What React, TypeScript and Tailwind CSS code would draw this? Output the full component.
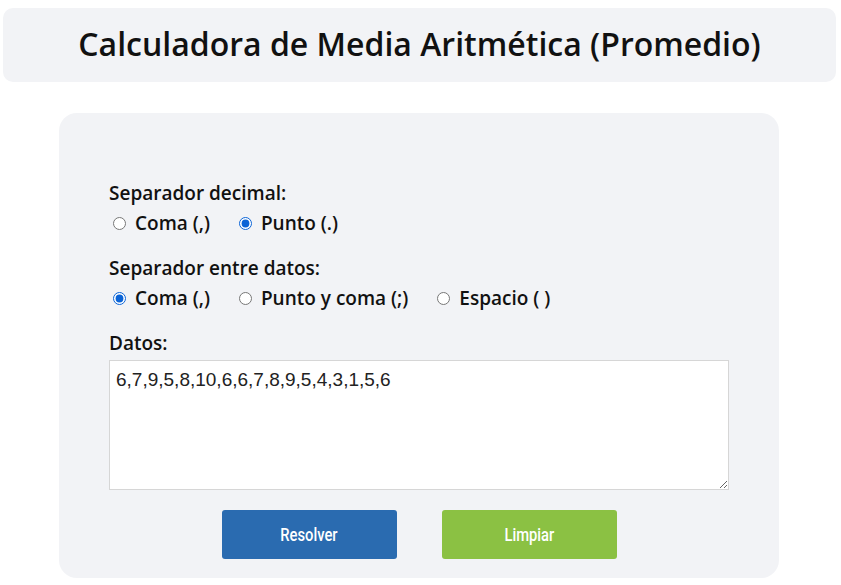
import React from "react";

function Opt({ label, checked, name }: { label: string; checked: boolean; name: string }) {
  return (
    <label className="flex items-center gap-[9px]">
      <input
        type="radio"
        name={name}
        defaultChecked={checked}
        className="w-[13px] h-[13px] m-0 accent-[#0b63d6]"
      />
      <span>{label}</span>
    </label>
  );
}

export default function App() {
  return (
    <div className="w-[841px] h-[585px] bg-white overflow-hidden" style={{ fontFamily: '"Open Sans", sans-serif' }}>
      <div className="pt-[8px] px-[3px] pr-[5px]">
        <div className="h-[74px] rounded-[10px] bg-[#f2f3f6] flex items-center justify-center">
          <h1 className="text-[32px] font-semibold text-[#111] leading-none pb-[2px]">
            Calculadora de Media Aritmética (Promedio)
          </h1>
        </div>
      </div>
      <div className="ml-[59px] mt-[31px] w-[720px] h-[465px] rounded-[18px] bg-[#f2f3f6] pl-[50px] pr-[50px] pt-[67px] text-[#111]">
        <div className="text-[19px] font-semibold leading-[26px]">Separador decimal:</div>
        <div className="flex gap-[29px] pl-[4px] text-[19px] font-semibold leading-[26px] mt-[4px]">
          <Opt name="dec" label="Coma (,)" checked={false} />
          <Opt name="dec" label="Punto (.)" checked={true} />
        </div>
        <div className="text-[19px] font-semibold leading-[26px] mt-[19px]">Separador entre datos:</div>
        <div className="flex gap-[29px] pl-[4px] text-[19px] font-semibold leading-[26px] mt-[4px]">
          <Opt name="sep" label="Coma (,)" checked={true} />
          <Opt name="sep" label="Punto y coma (;)" checked={false} />
          <Opt name="sep" label="Espacio ( )" checked={false} />
        </div>
        <div className="text-[19px] font-semibold leading-[26px] mt-[19px]">Datos:</div>
        <textarea
          className="block mt-[4px] w-[620px] h-[130px] border border-[#d6d6d6] bg-white px-[6px] py-[8px] text-[19px] leading-[22px] text-[#222] resize-y outline-none"
          style={{ fontFamily: '"Liberation Sans", Arial, sans-serif' }}
          defaultValue="6,7,9,5,8,10,6,6,7,8,9,5,4,3,1,5,6"
        />
        <div className="flex justify-center gap-[45px] mt-[20px]">
          <button
            className="w-[175px] h-[49px] rounded-[3px] bg-[#2a6bb0] text-white text-[18px] font-medium"
            style={{ fontFamily: 'Roboto, sans-serif' }}
          >
            <span className="inline-block scale-x-[0.82]">Resolver</span>
          </button>
          <button
            className="w-[175px] h-[49px] rounded-[3px] bg-[#8bc143] text-white text-[18px] font-medium"
            style={{ fontFamily: 'Roboto, sans-serif' }}
          >
            <span className="inline-block scale-x-[0.82]">Limpiar</span>
          </button>
        </div>
      </div>
    </div>
  );
}
